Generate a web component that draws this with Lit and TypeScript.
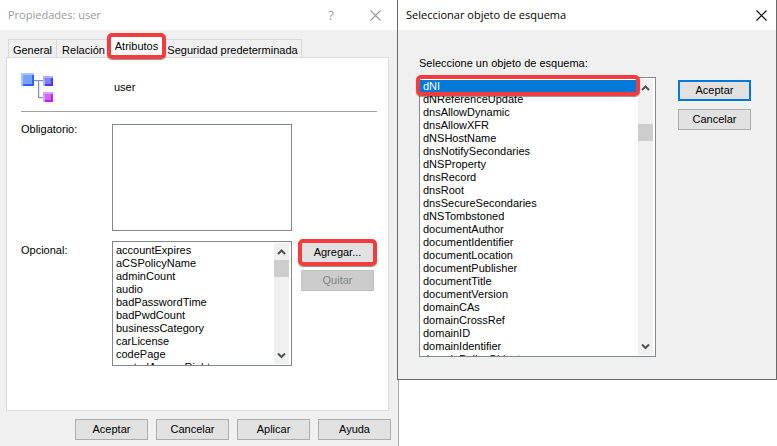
import { LitElement, html, css, svg } from "lit";
import { customElement, property } from "lit/decorators.js";
import { classMap } from "lit/directives/class-map.js";

const OPTIONAL = [
  "accountExpires", "aCSPolicyName", "adminCount", "audio", "badPasswordTime",
  "badPwdCount", "businessCategory", "carLicense", "codePage", "controlAccessRights",
];

const SCHEMA = [
  "dNI", "dNReferenceUpdate", "dnsAllowDynamic", "dnsAllowXFR", "dNSHostName",
  "dnsNotifySecondaries", "dNSProperty", "dnsRecord", "dnsRoot",
  "dnsSecureSecondaries", "dNSTombstoned", "documentAuthor", "documentIdentifier",
  "documentLocation", "documentPublisher", "documentTitle", "documentVersion",
  "domainCAs", "domainCrossRef", "domainID", "domainIdentifier", "domainPolicyObject",
];

const TABS = ["General", "Relación", "Atributos", "Seguridad predeterminada"];

const controls = css`
  * {
    box-sizing: border-box;
  }
  button {
    font: inherit;
    color: inherit;
    margin: 0;
    padding: 0;
  }
  .btn {
    display: block;
    width: 73px;
    height: 21px;
    line-height: 19px;
    border: 1px solid #adadad;
    background: #e1e1e1;
    text-align: center;
  }
  .btn.primary {
    border: 2px solid #0078d7;
    line-height: 17px;
  }
  .btn:disabled {
    background: #cccccc;
    border-color: #bfbfbf;
    color: #838383;
  }
  .titlebar {
    display: flex;
    align-items: center;
    height: 30px;
    background: #fff;
    font: 11px/30px "Open Sans", "Noto Sans", sans-serif;
  }
  .titlebar h1 {
    flex: 1;
    margin: 0;
    font: inherit;
  }
  .icon-btn {
    display: grid;
    place-items: center;
    width: 44px;
    height: 30px;
    border: 0;
    background: none;
  }
  .help {
    font-size: 13px;
  }
  .marked {
    position: relative;
  }
  .marked::after {
    content: "";
    position: absolute;
    inset: -3px;
    border: 4px solid #f23c3e;
    border-radius: 5px;
    box-shadow: 0 1px 1px rgba(0, 0, 0, 0.45);
    pointer-events: none;
  }
`;

const cross = html`<svg width="11" height="11" viewBox="0 0 11 11" aria-hidden="true">
  <path d="M0.5 0.5 L10.5 10.5 M10.5 0.5 L0.5 10.5" fill="none" stroke="currentColor" stroke-width="1.1" />
</svg>`;

/** List box with a classic scroll bar drawn beside its rows. */
@customElement("list-box")
export class ListBox extends LitElement {
  static formAssociated = true;
  static shadowRootOptions = { ...LitElement.shadowRootOptions, delegatesFocus: true };

  @property({ attribute: false }) items: string[] = [];
  @property() label = "";
  @property() selected = "";
  /** Space between the up arrow and the thumb, in pixels. */
  @property({ type: Number }) offset = 0;
  @property({ type: Boolean }) bar = false;

  static styles = css`
    :host {
      display: flex;
      box-sizing: border-box;
      border: 1px solid #828790;
      background: #fff;
      padding: 1px 2px 0 0;
    }
    select {
      flex: 1;
      min-width: 0;
      height: 100%;
      box-sizing: border-box;
      margin: 0;
      padding: 1px 0 0;
      border: 0;
      border-radius: 0;
      outline: 0;
      background: #fff;
      color: #000;
      font: 11px/13px "Liberation Sans", Arial, sans-serif;
      overflow: auto;
      scrollbar-width: none;
    }
    option {
      height: 13px;
      min-height: 0;
      padding: 0 3px;
      line-height: 13px;
      box-sizing: border-box;
    }
    option:checked {
      background: linear-gradient(#0078d7, #0078d7);
      -webkit-text-fill-color: #fff;
    }
    .bar {
      display: flex;
      flex-direction: column;
      width: 15px;
      margin-bottom: 1px;
      background: #f0f0f0;
    }
    .arrow {
      display: grid;
      place-items: center;
      height: 17px;
    }
    .thumb {
      height: 17px;
      background: #cdcdcd;
    }
    .rest {
      flex: 1;
    }
  `;

  render() {
    const arrow = (d: string) => html`<div class="arrow">
      <svg width="9" height="7" viewBox="0 0 9 7">${svg`<path d=${d} fill="none" stroke="#505050" stroke-width="2" />`}</svg>
    </div>`;
    return html`
      <select size="9" aria-label=${this.label}>
        ${this.items.map((i) => html`<option ?selected=${i === this.selected}>${i}</option>`)}
      </select>
      ${this.bar
        ? html`<div class="bar" aria-hidden="true">
            ${arrow("M1 6 L4.5 2.5 L8 6")}
            <div style="height:${this.offset}px"></div>
            <div class="thumb"></div>
            <div class="rest"></div>
            ${arrow("M1 1.5 L4.5 5 L8 1.5")}
          </div>`
        : ""}
    `;
  }
}

@customElement("properties-window")
export class PropertiesWindow extends LitElement {
  static styles = [
    controls,
    css`
      :host {
        display: flex;
        flex-direction: column;
        box-sizing: border-box;
        background: #f0f0f0;
        border-right: 1px solid #a8a8a8;
      }
      .titlebar {
        color: #999;
        padding: 0 1px 0 8px;
      }
      .tabs {
        display: grid;
        grid-template-columns: 48px 54px 53px 138px;
        align-items: end;
        height: 28px;
        padding-left: 8px;
      }
      .tab {
        height: 19px;
        border: 1px solid #d9d9d9;
        border-bottom: 0;
        margin-right: -1px;
        background: #f0f0f0;
        white-space: nowrap;
        line-height: 20px;
      }
      .tab.active {
        height: 20px;
        margin: 0 0 2px;
        border: 0;
        background: #fff;
        line-height: 18px;
        z-index: 1;
      }
      .panel {
        display: flex;
        flex-direction: column;
        margin: -1px 9px 0 6px;
        border: 1px solid #dcdcdc;
        background: #fff;
        height: 354px;
        padding: 15px 11px 0 14px;
      }
      .head {
        display: grid;
        grid-template-columns: 91px 1fr;
        border-bottom: 1px solid #a0a0a0;
        height: 39px;
      }
      .head svg {
        display: block;
      }
      .head .name {
        padding: 8px 0 0 2px;
      }
      .row {
        display: grid;
        grid-template-columns: 91px minmax(0, 1fr) 73px;
        margin: 12px 3px 0 0;
      }
      .row + .row {
        margin-top: 10px;
      }
      .row label {
        line-height: 11px;
      }
      .row + .row label {
        padding-top: 4px;
      }
      .row list-box {
        margin-right: 9px;
      }
      .required {
        height: 107px;
      }
      .optional {
        height: 125px;
      }
      .side {
        display: flex;
        flex-direction: column;
        gap: 7px;
        padding-top: 1px;
      }
      .footer {
        display: flex;
        justify-content: flex-end;
        gap: 8px;
        padding: 8px 7px;
      }
    `,
  ];

  render() {
    return html`
      <div class="titlebar">
        <h1>Propiedades: user</h1>
        <button class="icon-btn help" aria-label="Ayuda contextual">?</button>
        <button class="icon-btn" aria-label="Cerrar">${cross}</button>
      </div>
      <div class="tabs" role="tablist">
        ${TABS.map((t) => {
          const active = t === "Atributos";
          return html`<button role="tab" aria-selected=${active ? "true" : "false"}
            class=${classMap({ tab: true, active, marked: active })}>${t}</button>`;
        })}
      </div>
      <div class="panel" role="tabpanel">
        <div class="head">
          <svg width="32" height="29" viewBox="0 0 32 29" shape-rendering="crispEdges" aria-hidden="true">
            <path d="M13 8h9M18 8v17M18 25h4" fill="none" stroke="#e4e6ee" stroke-width="2" />
            <path d="M13 7.5h9M17.5 7v17M17 24.5h5" fill="none" stroke="#8492ab" />
            <path d="M0 0h13v13H0z" fill="#3060ff" />
            <path d="M0 0h13v2H2v11H0z" fill="#a8c6ff" />
            <path d="M2 2h9v9H2z" fill="#78a0ff" />
            <path d="M22 3h10v10H22z" fill="#4a38f0" />
            <path d="M22 3h10v2H24v8h-2z" fill="#b0aeff" />
            <path d="M24 5h6v6h-6z" fill="#8080ff" />
            <path d="M22 19h10v10H22z" fill="#c020ff" />
            <path d="M22 19h10v2H24v8h-2z" fill="#e49cff" />
            <path d="M24 21h6v6h-6z" fill="#cc68ff" />
          </svg>
          <span class="name">user</span>
        </div>
        <div class="row">
          <label for="required">Obligatorio:</label>
          <list-box id="required" class="required" label="Obligatorio"></list-box>
        </div>
        <div class="row">
          <label for="optional">Opcional:</label>
          <list-box id="optional" class="optional" label="Opcional" bar .items=${OPTIONAL}></list-box>
          <div class="side">
            <div class="marked"><button class="btn">Agregar...</button></div>
            <button class="btn" disabled>Quitar</button>
          </div>
        </div>
      </div>
      <div class="footer">
        ${["Aceptar", "Cancelar", "Aplicar", "Ayuda"].map((b) => html`<button class="btn">${b}</button>`)}
      </div>
    `;
  }
}

@customElement("schema-dialog")
export class SchemaDialog extends LitElement {
  static styles = [
    controls,
    css`
      :host {
        display: block;
        box-sizing: border-box;
        background: #f0f0f0;
        border: 1px solid #6a6a6a;
        border-top: 0;
      }
      .titlebar {
        padding-left: 8px;
      }
      .titlebar .icon-btn {
        width: 30px;
      }
      .body {
        display: grid;
        grid-template-columns: minmax(0, 1fr) 73px;
        column-gap: 22px;
        padding: 27px 25px 22px 21px;
      }
      label {
        grid-column: 1 / -1;
        line-height: 13px;
        margin-bottom: 7px;
      }
      .list {
        position: relative;
      }
      list-box {
        height: 280px;
      }
      .frame {
        position: absolute;
        top: 1px;
        left: 0;
        right: 19px;
        height: 15px;
        pointer-events: none;
      }
      .side {
        display: flex;
        flex-direction: column;
        gap: 8px;
        padding-top: 3px;
      }
    `,
  ];

  render() {
    return html`
      <div class="titlebar">
        <h1>Seleccionar objeto de esquema</h1>
        <button class="icon-btn" aria-label="Cerrar">${cross}</button>
      </div>
      <div class="body">
        <label for="schema">Seleccione un objeto de esquema:</label>
        <div class="list">
          <list-box id="schema" label="Seleccione un objeto de esquema" bar offset="28" selected="dNI" .items=${SCHEMA}></list-box>
          <div class="frame marked"></div>
        </div>
        <div class="side">
          <button class="btn primary">Aceptar</button>
          <button class="btn">Cancelar</button>
        </div>
      </div>
    `;
  }
}

@customElement("app-root")
export class AppRoot extends LitElement {
  static styles = css`
    :host {
      display: grid;
      grid-template-columns: minmax(0, 397fr) minmax(0, 380fr);
      min-height: 100vh;
      background: #fff;
      color: #000;
      font: 11px/13px "Liberation Sans", Arial, sans-serif;
    }
    properties-window {
      margin-right: -2px;
    }
    schema-dialog {
      align-self: start;
      position: relative;
    }
  `;

  render() {
    return html`
      <properties-window></properties-window>
      <schema-dialog></schema-dialog>
    `;
  }
}
